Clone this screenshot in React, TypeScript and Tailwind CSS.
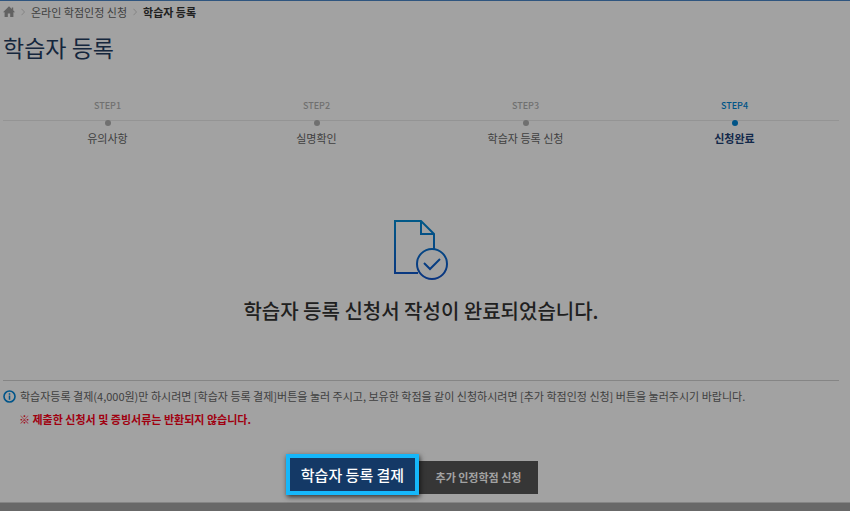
const steps = [
  { step: 'STEP1', label: '유의사항', current: false },
  { step: 'STEP2', label: '실명확인', current: false },
  { step: 'STEP3', label: '학습자 등록 신청', current: false },
  { step: 'STEP4', label: '신청완료', current: true },
];

function HomeIcon() {
  return (
    <svg className="h-3 w-3" viewBox="0 0 12 12" fill="#626262" aria-hidden="true">
      <path d="M6 0.3 L8.8 3 V1.4 H10.2 V4.3 L12 6.3 H10.4 V11 H7.2 V7.6 H4.8 V11 H1.6 V6.3 H0 Z" />
    </svg>
  );
}

function Chevron() {
  return (
    <svg className="h-2 w-1" viewBox="0 0 4 8" fill="none" stroke="#858585" aria-hidden="true">
      <path d="M0.5 0.8 L3.5 4 L0.5 7.2" />
    </svg>
  );
}

function DocumentIcon() {
  return (
    <svg className="h-[62px] w-14" viewBox="0 0 56 62" fill="none" strokeWidth="2" aria-hidden="true">
      <defs>
        <linearGradient id="ink" gradientUnits="userSpaceOnUse" x1="0" y1="0" x2="0" y2="62">
          <stop offset="0" stopColor="#005a88" />
          <stop offset="1" stopColor="#0a3480" />
        </linearGradient>
      </defs>
      <g stroke="url(#ink)">
        <path d="M25 55 H2 V3 H28 L41 16 V31" />
        <path d="M28 3 V16 H41" />
        <circle cx="39" cy="46" r="15" />
        <path d="M31 45 L37 51 L47 41" />
      </g>
    </svg>
  );
}

function InfoIcon() {
  return (
    <svg className="h-[13px] w-[13px] shrink-0" viewBox="0 0 13 13" fill="none" stroke="#00558a" aria-hidden="true">
      <circle cx="6.5" cy="6.5" r="5.5" strokeWidth="1.6" />
      <path d="M6.5 3.2 V4.7 M6.5 5.6 V9.7" strokeWidth="1.5" />
    </svg>
  );
}

export default function App() {
  return (
    <div className="flex min-h-screen flex-col border-t border-[#2f557f] bg-[#a2a2a2] font-['Noto_Sans_CJK_KR',sans-serif] text-[#404040]">
      <main className="pl-[3px] pr-[11px]">
        <nav aria-label="breadcrumb" className="flex h-[22px] items-center gap-[6px] text-[11px] leading-4">
          <a href="#home" aria-label="홈"><HomeIcon /></a>
          <Chevron />
          <a href="#apply">온라인 학점인정 신청</a>
          <Chevron />
          <strong className="font-bold text-[#202020]" aria-current="page">학습자 등록</strong>
        </nav>

        <h1 className="mt-2 text-[23px] leading-8 text-[#15273d]">학습자 등록</h1>

        <ol className="mt-[37px] grid grid-cols-4 text-center">
          {steps.map(({ step, label, current }) => (
            <li key={step} className={current ? 'text-[#005487]' : 'text-[#707070]'}>
              <div className="text-[9px] font-medium leading-3">{step}</div>
              <div className="mt-2 flex h-1 items-center justify-center border-t border-[#949494]">
                <span className="h-[6px] w-[6px] shrink-0 rounded-full bg-current" />
              </div>
              <div className={current ? 'mt-1 text-[11px] font-bold leading-5 text-[#13294a]' : 'mt-1 text-[11px] leading-5 text-[#404040]'}>
                {label}
              </div>
            </li>
          ))}
        </ol>

        <section className="mt-[70px] flex flex-col items-center border-b border-[#858585] pb-[53px]">
          <DocumentIcon />
          <h2 className="mt-[15px] text-[20px] font-medium leading-8 text-[#202020]">학습자 등록 신청서 작성이 완료되었습니다.</h2>
        </section>

        <div className="mt-[7px] text-[11px]">
          <p className="flex items-center gap-1 leading-4">
            <InfoIcon />
            학습자등록 결제(4,000원)만 하시려면 [학습자 등록 결제]버튼을 눌러 주시고, 보유한 학점을 같이 신청하시려면 [추가 학점인정 신청] 버튼을 눌러주시기 바랍니다.
          </p>
          <p className="mt-[7px] pl-4 font-bold leading-4 text-[#a00010]">※ 제출한 신청서 및 증빙서류는 반환되지 않습니다.</p>
        </div>

        <div className="mt-[27px] flex items-center justify-center pb-[7px] pr-[18px]">
          <button type="button" className="relative h-[41px] w-[133px] border-4 border-[#15b7fb] bg-[#143966] text-[15px] font-medium leading-5 text-white shadow-[1px_2px_5px_#000000b0]">
            학습자 등록 결제
          </button>
          <button type="button" className="mt-[5px] h-[33px] w-[119px] bg-[#363636] text-[11px] font-bold text-[#a2a2a2]">
            추가 인정학점 신청
          </button>
        </div>
      </main>
      <footer className="grow border-t border-[#858585] bg-[#686868]" />
    </div>
  );
}
